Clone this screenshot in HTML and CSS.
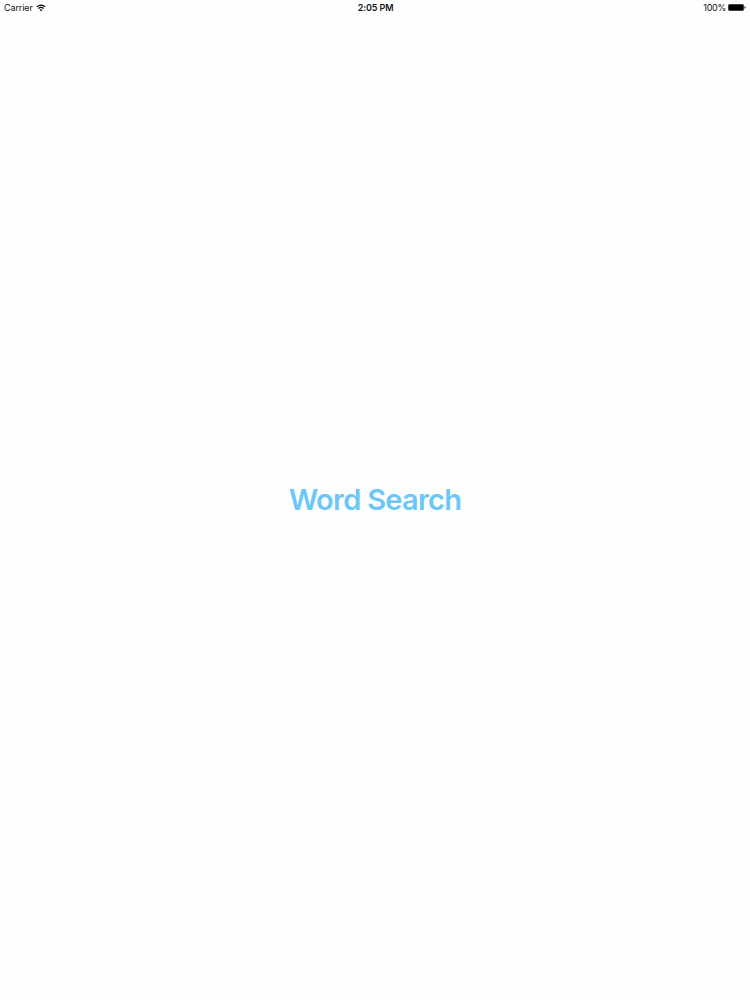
FILE: index.html
```
<!DOCTYPE html>
<html lang="en">
<head>
<meta charset="utf-8">
<title>Word Search</title>
<link rel="stylesheet" href="styles.css">
</head>
<body>
<div class="screen">
  <header class="status">
    <div class="carrier"><span>Carrier</span>
      <svg class="wifi" viewBox="0 0 18 14" aria-hidden="true"><path d="M1.5 5Q9-1.5 16.5 5M4.3 8Q9 4 13.7 8" fill="none" stroke="#000" stroke-width="2"/><path d="M6.3 10.2Q9 8 11.7 10.2L9 13z"/></svg>
    </div>
    <time class="clock">2:05 PM</time>
    <div class="power"><span>100%</span>
      <svg class="battery" viewBox="0 0 18 7" aria-hidden="true"><rect x=".25" y=".25" width="15.5" height="6.5" rx="1.3"/><path d="M16.5 2.2Q17.7 2.5 17.7 3.5T16.5 4.8z"/></svg>
    </div>
  </header>
  <main class="launch"><h1 class="title">Word Search</h1></main>
</div>
</body>
</html>
```
FILE: styles.css
```
body {
  margin: 0;
  background: #fefefe;
  color: #111;
  font-family: Inter, "Liberation Sans", sans-serif;
}
.screen {
  display: flex;
  flex-direction: column;
  height: 1000px;
}
.status {
  display: grid;
  grid-template-columns: 1fr auto 1fr;
  align-items: center;
  height: 15px;
  padding: 0 4px;
  font-size: 9px;
  line-height: 15px;
}
.carrier, .power {
  display: flex;
  align-items: center;
  gap: 3px;
}
.carrier {
  letter-spacing: -0.1px;
}
.power {
  justify-content: flex-end;
  gap: 2px;
  letter-spacing: -0.3px;
}
.wifi {
  width: 10px;
  height: 8px;
}
.battery {
  width: 18px;
  height: 7px;
}
.clock {
  padding-left: 1px;
  font-weight: 600;
  letter-spacing: -0.1px;
}
.launch {
  display: flex;
  flex: 1;
  align-items: center;
  justify-content: center;
  padding-bottom: 15px;
}
.title {
  margin: 0;
  color: #6bc7f5;
  font-size: 29px;
  font-weight: 600;
  line-height: 36px;
  letter-spacing: -0.72px;
}
```
